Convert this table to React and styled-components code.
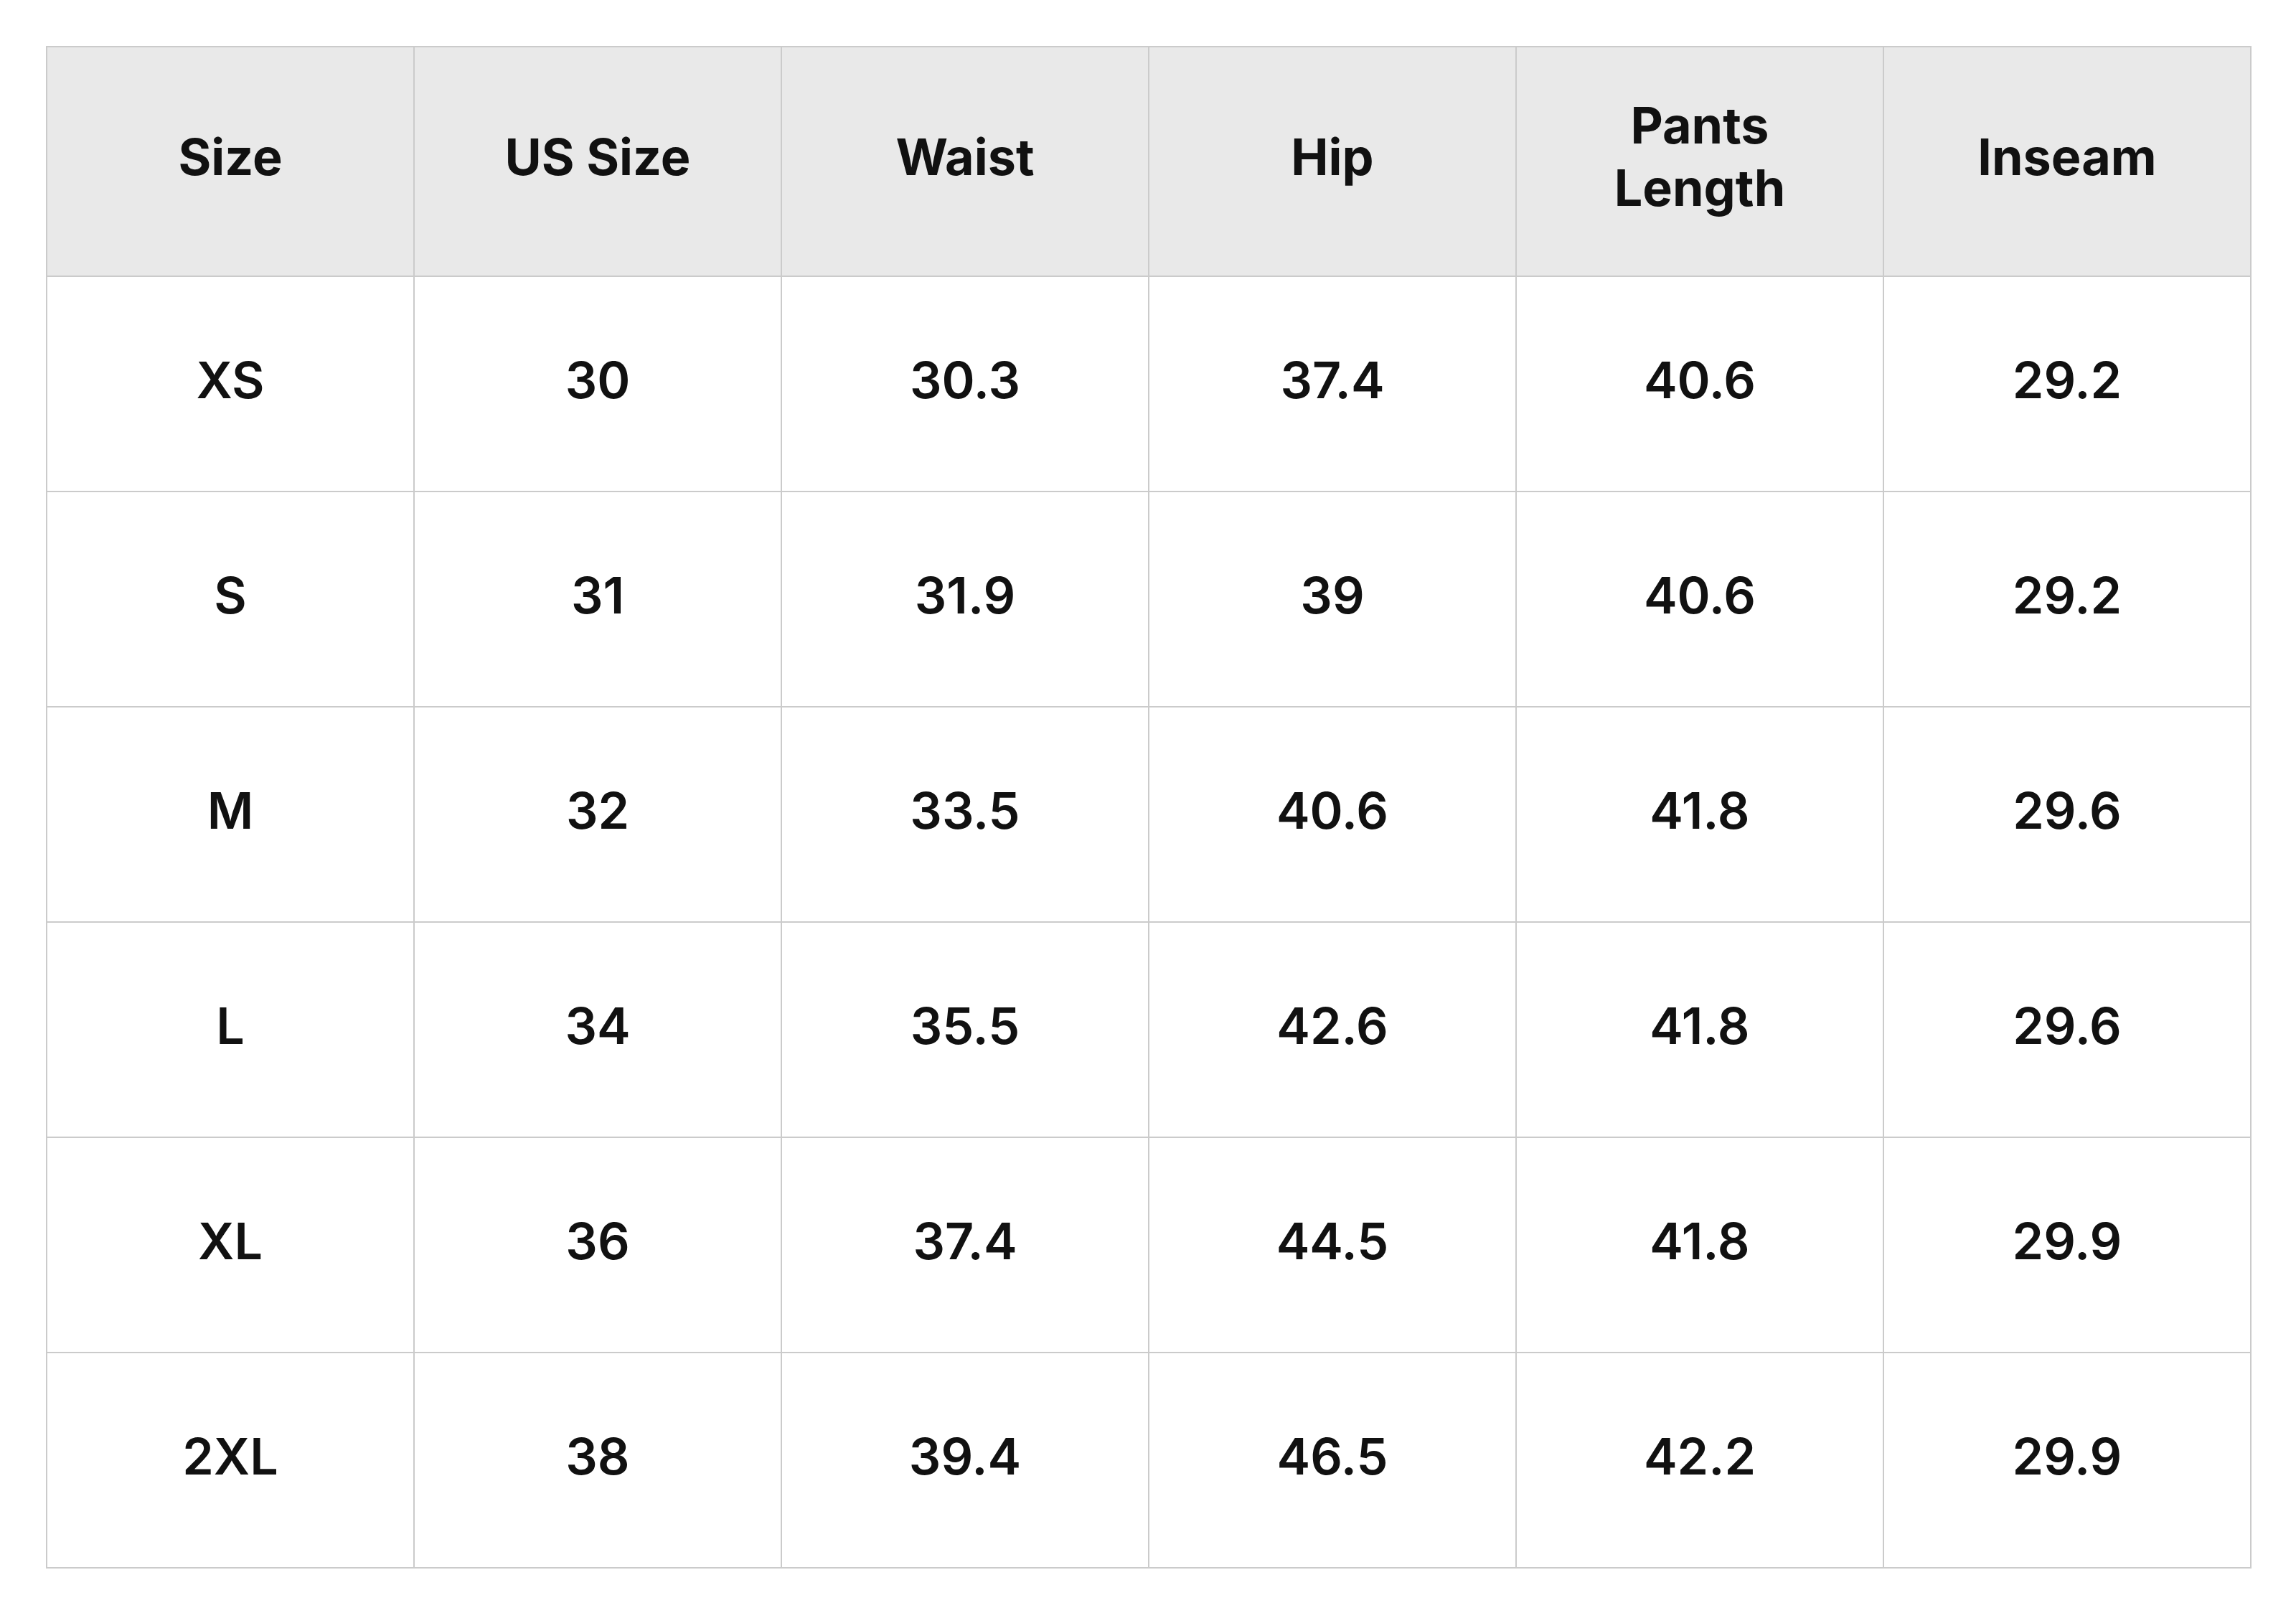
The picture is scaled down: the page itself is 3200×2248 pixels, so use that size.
import React from 'react';
import styled, { createGlobalStyle } from 'styled-components';

const GlobalStyle = createGlobalStyle`
  body {
    margin: 0;
    background: #ffffff;
    font-family: Inter, "Noto Sans", sans-serif;
    color: #111111;
  }
`;

const Page = styled.div`
  padding: 64px;
  background: #ffffff;
`;

const Table = styled.table`
  width: 3074px;
  border-collapse: collapse;
  table-layout: fixed;
`;

const HeadCell = styled.th`
  height: 306px;
  padding: 0 90px 12px;
  background: #e9e9e9;
  border: 2px solid #cbcbcb;
  font-size: 70px;
  font-weight: 700;
  line-height: 1.24;
  text-align: center;
  color: #111111;
`;

const Cell = styled.td`
  height: 286px;
  padding: 0 0 12px;
  border: 2px solid #cbcbcb;
  font-size: 70px;
  font-weight: 600;
  text-align: center;
  color: #111111;
`;

const headers = ['Size', 'US Size', 'Waist', 'Hip', 'Pants Length', 'Inseam'];

const rows = [
  ['XS', '30', '30.3', '37.4', '40.6', '29.2'],
  ['S', '31', '31.9', '39', '40.6', '29.2'],
  ['M', '32', '33.5', '40.6', '41.8', '29.6'],
  ['L', '34', '35.5', '42.6', '41.8', '29.6'],
  ['XL', '36', '37.4', '44.5', '41.8', '29.9'],
  ['2XL', '38', '39.4', '46.5', '42.2', '29.9'],
];

const App = () => {
  return (
    <Page>
      <GlobalStyle />
      <Table>
        <thead>
          <tr>
            {headers.map((h) => (
              <HeadCell key={h}>{h}</HeadCell>
            ))}
          </tr>
        </thead>
        <tbody>
          {rows.map((row) => (
            <tr key={row[0]}>
              {row.map((value, i) => (
                <Cell key={i}>{value}</Cell>
              ))}
            </tr>
          ))}
        </tbody>
      </Table>
    </Page>
  );
};

export default App;
